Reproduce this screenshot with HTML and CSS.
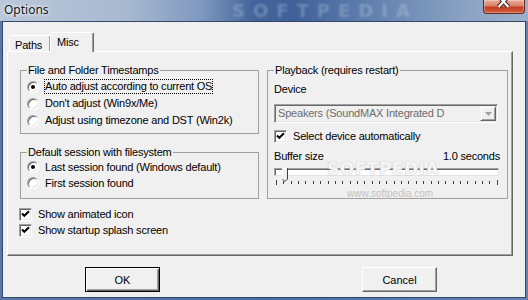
FILE: index.html
```html
<!DOCTYPE html>
<html lang="en">
<head>
  <meta charset="UTF-8">
  <title>Options</title>
  <link rel="stylesheet" href="styles.css">
</head>
<body>

<div class="window">
  <div class="titlebar">
    <span class="title">Options</span>
    <span class="wm-title">SOFTPEDIA</span>
    <span class="close">
      <svg width="42" height="14" viewBox="0 0 42 14">
        <path d="M16 -3 L26 8 M26 -3 L16 8" stroke="#4a2a24" stroke-width="4.5" fill="none"/>
        <path d="M16 -3 L26 8 M26 -3 L16 8" stroke="#fff" stroke-width="2.2" fill="none"/>
      </svg>
    </span>
  </div>

  <div class="client">
    <div class="tabs">
      <div class="tab tab-paths">Paths</div>
      <div class="tab tab-misc active">Misc</div>
    </div>

    <div class="panel">
      <div class="col">
        <fieldset class="group g-time">
          <legend>File and Folder Timestamps</legend>
          <div class="row"><span class="radio on"></span><span class="lbl focus">Auto adjust according to current OS</span></div>
          <div class="row"><span class="radio"></span><span class="lbl">Don't adjust (Win9x/Me)</span></div>
          <div class="row"><span class="radio"></span><span class="lbl">Adjust using timezone and DST (Win2k)</span></div>
        </fieldset>

        <fieldset class="group g-session">
          <legend>Default session with filesystem</legend>
          <div class="row"><span class="radio on"></span><span class="lbl">Last session found (Windows default)</span></div>
          <div class="row"><span class="radio"></span><span class="lbl">First session found</span></div>
        </fieldset>

        <div class="checks">
          <div class="row"><span class="check"><svg width="9" height="9" viewBox="0 0 9 9"><path d="M1 3.5 L3.3 5.8 L8 1.2" stroke="#000" stroke-width="2" fill="none"/></svg></span><span class="lbl">Show animated icon</span></div>
          <div class="row"><span class="check"><svg width="9" height="9" viewBox="0 0 9 9"><path d="M1 3.5 L3.3 5.8 L8 1.2" stroke="#000" stroke-width="2" fill="none"/></svg></span><span class="lbl">Show startup splash screen</span></div>
        </div>
      </div>

      <fieldset class="group g-play">
        <legend>Playback (requires restart)</legend>
        <div class="label">Device</div>
        <div class="combo">
          <span class="combo-text">Speakers (SoundMAX Integrated D</span>
          <span class="combo-btn"><svg width="7" height="4" viewBox="0 0 7 4"><path d="M0 0 H7 L3.5 4 Z" fill="#a0a0a0"/></svg></span>
        </div>
        <div class="row row-auto"><span class="check"><svg width="9" height="9" viewBox="0 0 9 9"><path d="M1 3.5 L3.3 5.8 L8 1.2" stroke="#000" stroke-width="2" fill="none"/></svg></span><span class="lbl">Select device automatically</span></div>
        <div class="buf"><span>Buffer size</span><span>1.0 seconds</span></div>
        <div class="slider">
          <div class="track"></div>
          <span class="thumb">
            <svg width="6" height="14" viewBox="0 0 6 14">
              <path d="M0.5 11 V0.5 H5.5 V11 L3 13.5 Z" fill="#f0f0f0"/>
              <path d="M0.5 11.5 V0.5 H5" stroke="#fff" fill="none"/>
              <path d="M5.5 0 V11 L3 13.5 L0.5 11" stroke="#404040" fill="none"/>
            </svg>
          </span>
          <div class="ticks">
            <i class="end"></i><i></i><i></i><i></i><i></i><i></i><i></i><i></i><i></i><i></i>
            <i></i><i></i><i></i><i></i><i></i><i></i><i></i><i></i><i></i><i></i>
            <i></i><i></i><i></i><i></i><i></i><i></i><i></i><i></i><i></i><i></i><i class="end"></i>
          </div>
        </div>
      </fieldset>

      <span class="wm-big">SOFTPEDIA</span>
      <span class="wm-url">www.softpedia.com</span>
    </div>

    <div class="buttons">
      <button class="btn default">OK</button>
      <button class="btn cancel">Cancel</button>
    </div>
  </div>
</div>

</body>
</html>
```

FILE: styles.css
```css
body { margin: 0; width: 528px; height: 300px; overflow: hidden; font-family: "Liberation Sans", Arial, sans-serif; font-size: 11px; letter-spacing: -0.2px; color: #000; }

.window { height: 300px; box-sizing: border-box; padding: 0 2px 2px; display: flex; flex-direction: column;
  background: linear-gradient(90deg, #b9c7d9 0%, #a8b9d0 24%, #7f99bf 38%, #43659b 48%, #3f6199 56%, #5677a8 66%, #7490b8 78%, #8ea5c5 90%, #9ab0cc 100%) top / 100% 21px no-repeat, linear-gradient(90deg, #5a78a6, #4a6ea4 50%, #6384b3); }

.titlebar { height: 21px; display: flex; align-items: flex-start; position: relative; }
.title { font-family: "Noto Sans", sans-serif; font-size: 12px; letter-spacing: 0; line-height: 19px; padding-left: 2px; color: #151515; text-shadow: 0 0 5px #fff, 0 0 3px rgba(255,255,255,0.9); position: relative; z-index: 1; }
.wm-title { position: absolute; left: 230px; top: 0; font: bold 18px/21px "DejaVu Sans", sans-serif; letter-spacing: 8px; color: rgba(214,226,242,0.28); filter: blur(1px); }
.close { margin-left: auto; margin-right: 1px; width: 42px; height: 14px; box-sizing: border-box; border: 1px solid #6b2418; border-top: none; border-radius: 0 0 4px 4px; position: relative; z-index: 1; overflow: hidden;
  background: linear-gradient(180deg, #e9ad9a 0%, #d98068 45%, #c33d22 55%, #d4603f 100%); box-shadow: inset 0 0 0 1px rgba(255,255,255,0.3); display: flex; }
.close svg { margin: -1px 0 0 -1px; }

.client { flex: 1; border: 1px solid #34476a; background: #f0f0f0; }

.tabs { display: flex; align-items: flex-end; height: 20px; margin: 10px 0 -1px 4px; }
.tab { box-sizing: border-box; background: #f0f0f0; border: 1px solid; border-bottom: none; border-color: #fff #696969 transparent #fff; box-shadow: inset -1px 0 0 #a0a0a0; border-radius: 2px 2px 0 0; line-height: 13px; }
.tab-paths { width: 42px; height: 17px; margin-left: 2px; padding: 3px 0 0 5px; }
.tab-misc { width: 44px; height: 20px; margin-left: -1px; padding: 3px 0 0 6px; position: relative; z-index: 1; }

.panel { position: relative; box-sizing: border-box; width: 506px; height: 205px; margin-left: 4px; padding: 12px 4px 0 12px; display: flex; gap: 8px; align-items: flex-start;
  border: 1px solid; border-color: #fff #696969 #696969 #fff; box-shadow: inset -1px -1px 0 #a0a0a0; }

.col { width: 239px; display: flex; flex-direction: column; }

.group { margin: 0; min-width: 0; box-sizing: border-box; border: 1px solid #a0a0a0; padding: 0 6px; }
.group legend { padding: 0 1px; line-height: 13px; }
.g-time { padding-top: 1px; padding-bottom: 4px; }
.g-time .row { height: 17px; }
.g-session { margin-top: 12px; padding-bottom: 7px; }
.g-play { width: 241px; padding: 0 8px 10px 6px; }

.row { display: flex; align-items: center; height: 16px; white-space: nowrap; }
.lbl { line-height: 13px; border: 1px dotted transparent; }
.lbl.focus { border-color: #000; }

.radio { flex: none; width: 12px; height: 12px; box-sizing: border-box; margin-right: 5px; border-radius: 50%; border: 1px solid; border-color: #a0a0a0 #fff #fff #a0a0a0;
  box-shadow: inset 1px 1px 0 #696969, inset -1px -1px 0 #e3e3e3; background: #fff; display: flex; align-items: center; justify-content: center; }
.radio.on::after { content: ""; width: 4px; height: 4px; border-radius: 50%; background: #000; }

.check { flex: none; width: 13px; height: 13px; box-sizing: border-box; margin-right: 5px; border: 1px solid; border-color: #a0a0a0 #fff #fff #a0a0a0;
  box-shadow: inset 1px 1px 0 #696969, inset -1px -1px 0 #e3e3e3; background: #fff; display: flex; align-items: center; justify-content: center; }

.checks { margin: 7px 0 0 -1px; }

.label { margin-top: 6px; line-height: 13px; }

.combo { margin-top: 8px; width: 224px; height: 19px; box-sizing: border-box; padding: 1px 1px 1px 3px; display: flex; align-items: center; background: #f0f0f0;
  border: 1px solid; border-color: #a0a0a0 #fff #fff #a0a0a0; box-shadow: inset 1px 1px 0 #696969, inset -1px -1px 0 #e3e3e3; }
.combo-text { flex: 1; color: #6d6d6d; line-height: 13px; white-space: nowrap; overflow: hidden; }
.combo-btn { flex: none; width: 16px; height: 15px; box-sizing: border-box; border: 1px solid; border-color: #f0f0f0 #696969 #696969 #f0f0f0;
  box-shadow: inset 1px 1px 0 #fff, inset -1px -1px 0 #a0a0a0; display: flex; align-items: center; justify-content: center; }

.row-auto { margin-top: 5px; }

.buf { margin: 6px -1px 0 0; display: flex; justify-content: space-between; line-height: 13px; }

.slider { position: relative; margin-top: 5px; height: 20px; }
.track { margin-top: 2px; height: 8px; box-sizing: border-box; background: #fff; border: 1px solid; border-color: #a0a0a0 #e3e3e3 #e3e3e3 #a0a0a0; box-shadow: inset 1px 1px 0 #696969; }
.thumb { position: absolute; left: 8px; top: 0; display: flex; }
.ticks { margin: 4px 1px 0 2px; display: flex; justify-content: space-between; align-items: flex-start; }
.ticks i { width: 1px; height: 3px; margin-top: 1px; background: #404040; }
.ticks i.end { height: 5px; margin-top: 0; }

.wm-big { position: absolute; left: 319px; top: 107px; font: bold 17px "DejaVu Sans", sans-serif; letter-spacing: 0.5px; color: rgba(255,255,255,0.85); text-shadow: 0 0 1px #c4c4c4, 0 0 1px #c4c4c4; }
.wm-url { position: absolute; left: 339px; top: 136px; font-size: 10px; letter-spacing: 0; color: #c2c2c2; }

.buttons { display: flex; margin-top: 11px; }
.btn { width: 75px; height: 25px; box-sizing: border-box; padding: 0; font: inherit; color: #000; background: #f0f0f0;
  border: 1px solid; border-color: #fff #696969 #696969 #fff; box-shadow: inset -1px -1px 0 #a0a0a0; }
.btn.default { margin-left: 82px; border-color: #000; box-shadow: inset 1px 1px 0 #fff, inset -1px -1px 0 #696969, inset -2px -2px 0 #a0a0a0; }
.btn.cancel { margin-left: 202px; }
```
